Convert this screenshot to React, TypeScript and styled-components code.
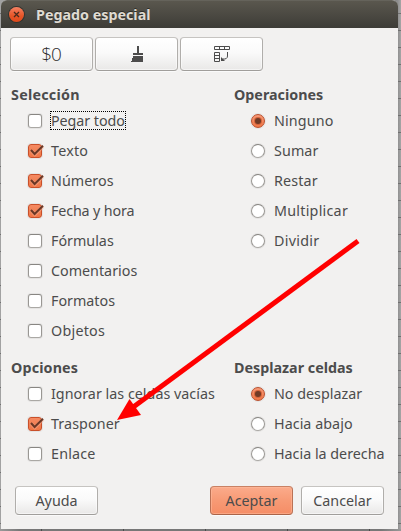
import React from 'react';
import styled, { createGlobalStyle, css } from 'styled-components';

const Global = createGlobalStyle`
  * { box-sizing: border-box; }
  body { margin: 0; background: #999; overflow: hidden; }
`;

const Sheet = styled.div`
  position: relative;
  width: 401px;
  height: 531px;
  padding: 0 3px 2px 1px;
  background:
    repeating-linear-gradient(to bottom, transparent 0 13px, #707070 13px 14px, transparent 14px 17px),
    linear-gradient(to right, #a2a2a2 0 1px, #898989 397px, #a6a6a6 401px);
`;

const Edge = styled.div`
  height: 2px;
  margin: 0 -3px 0 -1px;
  background:
    repeating-linear-gradient(to right, transparent 0 41px, #4c4c4c 41px 42px, transparent 42px 82px),
    linear-gradient(to right, #999, #777 5%, #777 95%, #999);
`;

const Window = styled.main`
  display: flex;
  flex-direction: column;
  width: 397px;
  height: 529px;
  border-radius: 6px 6px 0 0;
  background: #f2f1f0;
  color: #4c4c4c;
  font: 14.3px/20px 'Noto Sans', 'Open Sans', sans-serif;
  white-space: nowrap;
`;

const TitleBar = styled.header`
  display: flex;
  align-items: center;
  flex: 0 0 28px;
  gap: 12px;
  padding-left: 8px;
  border-radius: 6px 6px 0 0;
  border-top: 1px solid #65635b;
  background: linear-gradient(#5a574e, #3d3c37);
  color: #dfdbd2;
  font-weight: 700;
  text-shadow: 0 -1px #2d2c28;
`;

const CloseButton = styled.button`
  display: grid;
  place-items: center;
  width: 15px;
  height: 15px;
  padding: 0;
  border: 0;
  border-radius: 50%;
  background: linear-gradient(#f58163, #e65527 60%, #e04a1c);
  box-shadow: 0 0 0 1px #34332e;
`;

const Label = styled.span<{ $track?: number }>`
  letter-spacing: ${p => p.$track ?? 0}px;
`;

const raised = css`
  border: 1px solid;
  border-color: #c6c4c1 #b0aeab #a09e9b;
  border-radius: 4px;
  background: linear-gradient(#fff, #fafafa 45%, #e9e8e7);
  box-shadow: inset 0 0 0 1px rgba(255, 255, 255, .5), 0 1px #fafafa;
`;

const Toolbar = styled.div`
  display: flex;
  gap: 2px;
  padding: 9px 0 0 9px;
`;

const ToolButton = styled.button`
  ${raised}
  display: grid;
  place-items: center;
  width: 83px;
  height: 34px;
  padding: 0;
  color: #4c4c4c;
`;

const Currency = styled.span`
  margin-right: 1px;
  color: #2c2c2c;
  font: 300 19px/24px 'Open Sans', 'Noto Sans', sans-serif;
  letter-spacing: -1.2px;
`;

const Columns = styled.div<{ $top: number }>`
  display: grid;
  grid-template-columns: 223px 1fr;
  padding: ${p => p.$top}px 0 0 10px;
`;

const Group = styled.section`
  display: flex;
  flex-direction: column;
`;

const Heading = styled.h2<{ $track?: number }>`
  height: 20px;
  margin: 0 0 1px;
  font-size: 14.3px;
  line-height: 20px;
  font-weight: 700;
  letter-spacing: ${p => p.$track ?? 0}px;
`;

const Row = styled.label`
  display: flex;
  align-items: center;
  height: 30px;
  gap: 9px;
  padding-left: 17px;
`;

const Caption = styled(Label)<{ $focused?: boolean }>`
  outline: ${p => (p.$focused ? '1px dotted #000' : 'none')};
  margin-top: -1px;
  height: 17px;
  line-height: 17px;
`;

const Box = styled.span<{ $on?: boolean }>`
  display: block;
  width: 14px;
  height: 14px;
  border: 1px solid;
  border-color: ${p => (p.$on ? '#c9502a' : '#888682 #999793 #aaa8a4')};
  border-radius: 3px;
  background: ${p => (p.$on ? 'linear-gradient(#f58a62, #f07746)' : '#fff')};
  box-shadow: 0 0 0 1px rgba(0, 0, 0, .05);
  svg { display: block; overflow: visible; }
`;

const Dot = styled.span<{ $on?: boolean }>`
  display: grid;
  place-items: center;
  width: 14px;
  height: 14px;
  border: 1px solid;
  border-color: ${p => (p.$on ? '#b94f2d' : '#888682 #999793 #aaa8a4')};
  border-radius: 50%;
  background: ${p => (p.$on ? 'linear-gradient(#f79a78, #f07746)' : '#fff')};
  box-shadow: 0 0 0 1px rgba(0, 0, 0, .05);
  &::after {
    content: '';
    display: ${p => (p.$on ? 'block' : 'none')};
    width: 6px;
    height: 6px;
    border-radius: 50%;
    background: #703a26;
    box-shadow: 0 0 0 1px #d3633b;
  }
`;

const Footer = styled.footer`
  display: flex;
  gap: 8px;
  padding: 17px 0 0 14px;
`;

const Button = styled.button<{ $primary?: boolean }>`
  ${raised}
  width: 83px;
  height: 29px;
  padding: 0;
  color: #4c4c4c;
  font: inherit;
  &:first-child { margin-right: 104px; }
  ${p => p.$primary && css`
    border-color: #c98164 #b97155 #aa6448;
    background: linear-gradient(#fbab8b, #f79a75 50%, #f58d66);
    box-shadow: inset 0 0 0 1px rgba(255, 190, 160, .5), 0 1px #fafafa;
  `}
`;

const Pointer = styled.svg`
  position: absolute;
  left: 0;
  top: 0;
  pointer-events: none;
`;

type Item = { text: string; track?: number; on?: boolean; focused?: boolean };

const content: Item[] = [
  { text: 'Pegar todo', focused: true, track: -0.05 },
  { text: 'Texto', on: true, track: 0.2 },
  { text: 'Números', on: true, track: 0.05 },
  { text: 'Fecha y hora', on: true, track: -0.15 },
  { text: 'Fórmulas' },
  { text: 'Comentarios' },
  { text: 'Formatos' },
  { text: 'Objetos', track: 0.25 },
];
const operations: Item[] = [
  { text: 'Ninguno', on: true, track: 0.15 },
  { text: 'Sumar', track: 0.1 },
  { text: 'Restar', track: 0.15 },
  { text: 'Multiplicar', track: 0.25 },
  { text: 'Dividir', track: 0.3 },
];
const options: Item[] = [
  { text: 'Ignorar las celdas vacías', track: 0.02 },
  { text: 'Trasponer', on: true, track: 0.1 },
  { text: 'Enlace', track: 0.2 },
];
const shifts: Item[] = [
  { text: 'No desplazar', on: true },
  { text: 'Hacia abajo', track: 0.05 },
  { text: 'Hacia la derecha' },
];

const Check = () => (
  <svg width="12" height="12" viewBox="0 0 12 12" fill="none">
    <path d="M2.2 5.500 5.8 9.500 14 1.500" stroke="#f9ad92" strokeWidth="3.6" opacity=".5" />
    <path d="M2 5 5.600 9 14 .8" stroke="#6b3826" strokeWidth="2.1" />
  </svg>
);

const Brush = () => (
  <svg width="16" height="18" viewBox="0 0 16 18" fill="#4c4c4c" shapeRendering="crispEdges">
    <path d="M8 1h2v7h4v2H4V8h4z" />
    <path d="M4 11h10v6H1l2-2z" />
  </svg>
);

const Transpose = () => (
  <svg width="18" height="18" viewBox="0 0 18 18" fill="none" stroke="#4c4c4c">
    <path d="M1.5 1.500h15v3h-15zM6.500 1.500v3M11.500 1.500v3M1.500 7.500h5v9h-5zM1.500 10.500h5M1.500 13.500h5" />
    <path d="M14.500 7v4q0 3.500-5 3" />
    <path d="M8 12v4h4z" fill="#4c4c4c" stroke="none" />
  </svg>
);

function Choices({ title, track, items, radio }: { title: string; track?: number; items: Item[]; radio?: boolean }) {
  return (
    <Group>
      <Heading $track={track}>{title}</Heading>
      {items.map(item => (
        <Row key={item.text}>
          {radio ? <Dot $on={item.on} /> : <Box $on={item.on}>{item.on && <Check />}</Box>}
          <Caption $track={item.track} $focused={item.focused}>{item.text}</Caption>
        </Row>
      ))}
    </Group>
  );
}

export default function App() {
  return (
    <Sheet>
      <Global />
      <Window>
        <TitleBar>
          <CloseButton aria-label="Cerrar">
            <svg width="7" height="7" viewBox="0 0 7 7" stroke="#4a2a1c" strokeWidth="1.3">
              <path d="M1 1l5 5M6 1L1 6" />
            </svg>
          </CloseButton>
          <Label>Pegado especial</Label>
        </TitleBar>
        <Toolbar>
          <ToolButton><Currency>$0</Currency></ToolButton>
          <ToolButton><Brush /></ToolButton>
          <ToolButton><Transpose /></ToolButton>
        </Toolbar>
        <Columns $top={14}>
          <Choices title="Selección" track={0.25} items={content} />
          <Choices title="Operaciones" items={operations} radio />
        </Columns>
        <Columns $top={12}>
          <Choices title="Opciones" track={0.15} items={options} />
          <Choices title="Desplazar celdas" items={shifts} radio />
        </Columns>
        <Footer>
          <Button><Label>Ayuda</Label></Button>
          <Button $primary><Label>Aceptar</Label></Button>
          <Button><Label>Cancelar</Label></Button>
        </Footer>
      </Window>
      <Edge />
      <Pointer width="401" height="531" viewBox="0 0 401 531">
        <path d="M358 241L132 408" stroke="#f00" strokeWidth="5" />
        <path d="M117 420l12.500-21 11.500 16z" fill="#f00" />
      </Pointer>
    </Sheet>
  );
}
